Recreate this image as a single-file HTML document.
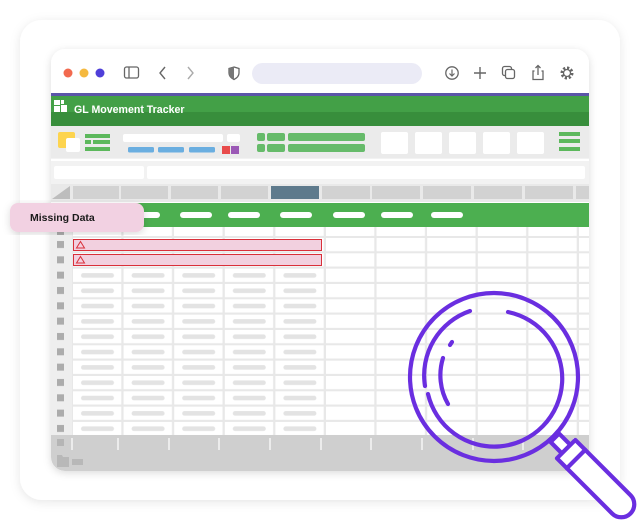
<!DOCTYPE html>
<html><head><meta charset="utf-8"><style>
html,body{margin:0;padding:0;background:#fff;width:642px;height:525px;overflow:hidden}
svg{display:block}
text{font-family:"Liberation Sans",sans-serif;font-weight:bold}
</style></head><body>
<svg width="642" height="525" viewBox="0 0 642 525" xmlns="http://www.w3.org/2000/svg">
<defs>
<filter id="sh" x="-10%" y="-10%" width="120%" height="120%"><feDropShadow dx="0" dy="2" stdDeviation="5" flood-color="#000" flood-opacity="0.10"/></filter>
<filter id="sh2" x="-10%" y="-10%" width="120%" height="120%"><feDropShadow dx="0" dy="2" stdDeviation="4" flood-color="#000" flood-opacity="0.14"/></filter>
<pattern id="cells" x="72" y="238" width="50.6" height="15.33" patternUnits="userSpaceOnUse">
<rect x="1" y="0" width="48.3" height="13.2" fill="#fff"/>
</pattern>
<pattern id="pills" x="72" y="238" width="50.6" height="15.33" patternUnits="userSpaceOnUse">
<rect x="9" y="4.5" width="33" height="4.5" rx="2.2" fill="#e3e3e3"/>
</pattern>
<pattern id="nums" x="52" y="238" width="20" height="15.33" patternUnits="userSpaceOnUse">
<rect x="5" y="3" width="7" height="7" fill="#acacac"/>
</pattern>
<clipPath id="win"><rect x="51" y="49" width="538" height="422" rx="14"/></clipPath>
</defs>
<rect x="20" y="20" width="600" height="480" rx="22" fill="#fff" filter="url(#sh)"/>
<rect x="51" y="49" width="538" height="422" rx="14" fill="#fff" filter="url(#sh2)"/>
<g clip-path="url(#win)">
<circle cx="68" cy="73" r="4.5" fill="#f26a4f"/>
<circle cx="84" cy="73" r="4.5" fill="#f5b93f"/>
<circle cx="100" cy="73" r="4.5" fill="#4f3fd9"/>
<rect x="124.5" y="67" width="14" height="11" rx="2" fill="none" stroke="#666" stroke-width="1.3"/>
<line x1="129" y1="67" x2="129" y2="78" stroke="#666" stroke-width="1.3"/>
<path d="M165 67 L160 73 L165 79" fill="none" stroke="#666" stroke-width="1.4"/>
<path d="M188 67 L193 73 L188 79" fill="none" stroke="#aaa" stroke-width="1.4"/>
<path d="M234 67 L239 68.5 L239 73 Q239 77 234 79.5 Q229 77 229 73 L229 68.5 Z" fill="#fff" stroke="#666" stroke-width="1.3"/>
<path d="M234 67 L234 79.5 Q229 77 229 73 L229 68.5 Z" fill="#777"/>
<rect x="252" y="63" width="170" height="21" rx="10.5" fill="#ebebf6"/>
<circle cx="452" cy="73" r="6.2" fill="none" stroke="#666" stroke-width="1.3"/>
<path d="M452 69.5 V76 M449.5 73.5 L452 76 L454.5 73.5" fill="none" stroke="#666" stroke-width="1.2"/>
<path d="M480 67 V79 M474 73 H486" stroke="#666" stroke-width="1.4"/>
<rect x="502.5" y="66.5" width="9" height="9" rx="2" fill="none" stroke="#666" stroke-width="1.3"/>
<rect x="505.5" y="69.5" width="9" height="9" rx="2" fill="#fff" stroke="#666" stroke-width="1.3"/>
<path d="M534.5 71 H533 V79.5 H543 V71 H541.5 M538 75 V65.5 M535.5 68 L538 65.5 L540.5 68" fill="none" stroke="#666" stroke-width="1.3"/>
<circle cx="567" cy="73" r="5" fill="none" stroke="#666" stroke-width="3" stroke-dasharray="2.2 1.7"/>
<circle cx="567" cy="73" r="3.5" fill="none" stroke="#666" stroke-width="1.3"/>
<rect x="51" y="93" width="538" height="3" fill="#5b55a8"/>
<rect x="51" y="96" width="538" height="16" fill="#43a047"/>
<rect x="51" y="112" width="538" height="14" fill="#388e3c"/>
<rect x="54" y="100" width="6" height="5" fill="#fff"/><rect x="54" y="106" width="6" height="6" fill="#fff"/><rect x="61" y="105" width="6" height="7" fill="#fff"/><rect x="61" y="100" width="3" height="4" fill="#fff"/>
<text x="74" y="113" font-size="10.6" fill="#fff">GL Movement Tracker</text>
<rect x="51" y="126" width="538" height="32" fill="#ebebeb"/>
<rect x="58" y="132" width="17" height="16" rx="2" fill="#fdd44f"/>
<rect x="66" y="138" width="14" height="14" rx="2" fill="#fff"/>
<rect x="85" y="134" width="25" height="4" fill="#5cb85c"/>
<rect x="85" y="140" width="6" height="4" fill="#5cb85c"/><rect x="93" y="140" width="17" height="4" fill="#5cb85c"/>
<rect x="85" y="147" width="25" height="4" fill="#5cb85c"/>
<rect x="123" y="134" width="100" height="8" rx="2" fill="#fff"/>
<rect x="227" y="134" width="13" height="8" rx="2" fill="#fff"/>
<rect x="128" y="147" width="26" height="5.5" rx="1.5" fill="#6aaee0"/>
<rect x="158" y="147" width="26" height="5.5" rx="1.5" fill="#6aaee0"/>
<rect x="189" y="147" width="26" height="5.5" rx="1.5" fill="#6aaee0"/>
<rect x="222" y="146" width="8" height="8" fill="#e84b4b"/>
<rect x="231" y="146" width="8" height="8" fill="#9b59b6"/>
<rect x="257" y="133" width="8" height="8" rx="2" fill="#66bb6a"/><rect x="267" y="133" width="18" height="8" rx="2" fill="#66bb6a"/><rect x="288" y="133" width="77" height="8" rx="2" fill="#66bb6a"/>
<rect x="257" y="144" width="8" height="8" rx="2" fill="#66bb6a"/><rect x="267" y="144" width="18" height="8" rx="2" fill="#66bb6a"/><rect x="288" y="144" width="77" height="8" rx="2" fill="#66bb6a"/>
<rect x="381" y="132" width="27" height="22" rx="2" fill="#fff"/>
<rect x="415" y="132" width="27" height="22" rx="2" fill="#fff"/>
<rect x="449" y="132" width="27" height="22" rx="2" fill="#fff"/>
<rect x="483" y="132" width="27" height="22" rx="2" fill="#fff"/>
<rect x="517" y="132" width="27" height="22" rx="2" fill="#fff"/>
<rect x="559" y="132" width="21" height="4" fill="#5cb85c"/><rect x="559" y="139" width="21" height="4" fill="#5cb85c"/><rect x="559" y="147" width="21" height="4" fill="#5cb85c"/>
<rect x="51" y="158" width="538" height="26" fill="#f2f2f2"/>
<rect x="51" y="159" width="538" height="2" fill="#fff"/>
<rect x="54" y="166" width="90" height="13" rx="2" fill="#fff"/>
<rect x="147" y="166" width="438" height="13" rx="2" fill="#fff"/>
<rect x="51" y="184" width="538" height="18" fill="#e9e9e9"/>
<path d="M52 199 L70 186 L70 199 Z" fill="#bdbdbd"/>
<g fill="#d2d2d2">
<rect x="73" y="186" width="46" height="13"/><rect x="121" y="186" width="47" height="13"/><rect x="171" y="186" width="47" height="13"/><rect x="221" y="186" width="47" height="13"/>
<rect x="322" y="186" width="48" height="13"/><rect x="372" y="186" width="48" height="13"/><rect x="423" y="186" width="48" height="13"/><rect x="474" y="186" width="48" height="13"/><rect x="525" y="186" width="48" height="13"/><rect x="576" y="186" width="13" height="13"/>
</g>
<rect x="271" y="186" width="48" height="13" fill="#5e7a8c"/>
<rect x="51" y="203" width="538" height="24" fill="#4caf50"/>
<g fill="#fff">
<rect x="140" y="212" width="20" height="6" rx="3"/><rect x="180" y="212" width="32" height="6" rx="3"/><rect x="228" y="212" width="32" height="6" rx="3"/>
<rect x="280" y="212" width="32" height="6" rx="3"/><rect x="333" y="212" width="32" height="6" rx="3"/><rect x="381" y="212" width="32" height="6" rx="3"/><rect x="431" y="212" width="32" height="6" rx="3"/>
</g>
<rect x="51" y="227" width="538" height="208" fill="#e8e8e8"/>
<rect x="51" y="227" width="538" height="208" fill="url(#cells)"/>
<g fill="#fff"><rect x="73" y="227" width="45" height="9"/><rect x="123.6" y="227" width="45" height="9"/><rect x="174" y="227" width="45" height="9"/><rect x="225" y="227" width="45" height="9"/><rect x="275.5" y="227" width="45" height="9"/><rect x="326" y="227" width="45" height="9"/><rect x="376.6" y="227" width="45" height="9"/><rect x="427" y="227" width="45" height="9"/><rect x="478" y="227" width="45" height="9"/><rect x="528.5" y="227" width="45" height="9"/><rect x="579" y="227" width="10" height="9"/></g>
<rect x="51" y="227" width="21" height="208" fill="#eeeeee"/>
<rect x="52" y="238" width="20" height="197" fill="url(#nums)"/>
<rect x="57" y="229" width="7" height="6" fill="#acacac"/>
<rect x="73" y="269" width="253" height="166" fill="url(#pills)"/>
<rect x="73.5" y="239.5" width="248" height="11" fill="#f2d0df" stroke="#d9303a" stroke-width="1"/>
<rect x="73.5" y="254.5" width="248" height="11" fill="#f2d0df" stroke="#d9303a" stroke-width="1"/>
<path d="M80.5 241.5 L84.5 248 L76.5 248 Z" fill="none" stroke="#d9303a" stroke-width="1"/>
<path d="M80.5 256.5 L84.5 263 L76.5 263 Z" fill="none" stroke="#d9303a" stroke-width="1"/>
<rect x="51" y="435" width="538" height="36" fill="#cfcfcf"/>
<rect x="57" y="439" width="7" height="7" fill="#b5b5b5"/>
<g fill="#ececec"><rect x="71" y="438" width="2" height="12"/><rect x="117" y="438" width="2" height="12"/><rect x="168" y="438" width="2" height="12"/><rect x="218" y="438" width="2" height="12"/><rect x="269" y="438" width="2" height="12"/><rect x="320" y="438" width="2" height="12"/><rect x="370" y="438" width="2" height="12"/><rect x="421" y="438" width="2" height="12"/><rect x="472" y="438" width="2" height="12"/><rect x="522" y="438" width="2" height="12"/><rect x="573" y="438" width="2" height="12"/></g>
<path d="M57 455 H62 L63 457 H69 V467 H57 Z" fill="#b8b8b8"/>
<rect x="72" y="459" width="11" height="6" fill="#b8b8b8"/>
</g>
<rect x="10" y="203" width="134" height="29" rx="8" fill="#f2d1e2" filter="url(#sh2)"/>
<text x="30" y="221" font-size="10.5" fill="#1a1a1a">Missing Data</text>
<g fill="none" stroke="#6a2ee0" stroke-width="4.2" stroke-linecap="round" stroke-linejoin="round">
<circle cx="494" cy="377" r="84"/>
<path d="M470 311 A68 68 0 0 0 425 386"/>
<path d="M508 312 A68 68 0 1 1 428 394"/>
<path d="M450 345 L452 342"/>
<path d="M443 358 A58 58 0 0 0 448 404"/>
<g transform="translate(494 377) rotate(45)">
<rect x="86" y="-6" width="16" height="12" fill="#fff"/>
<path d="M102 -13 H180 A13 13 0 0 1 180 13 H102 Z" fill="#fff"/>
<line x1="116" y1="-13" x2="116" y2="13"/>
</g>
</g>
</svg>
</body></html>
